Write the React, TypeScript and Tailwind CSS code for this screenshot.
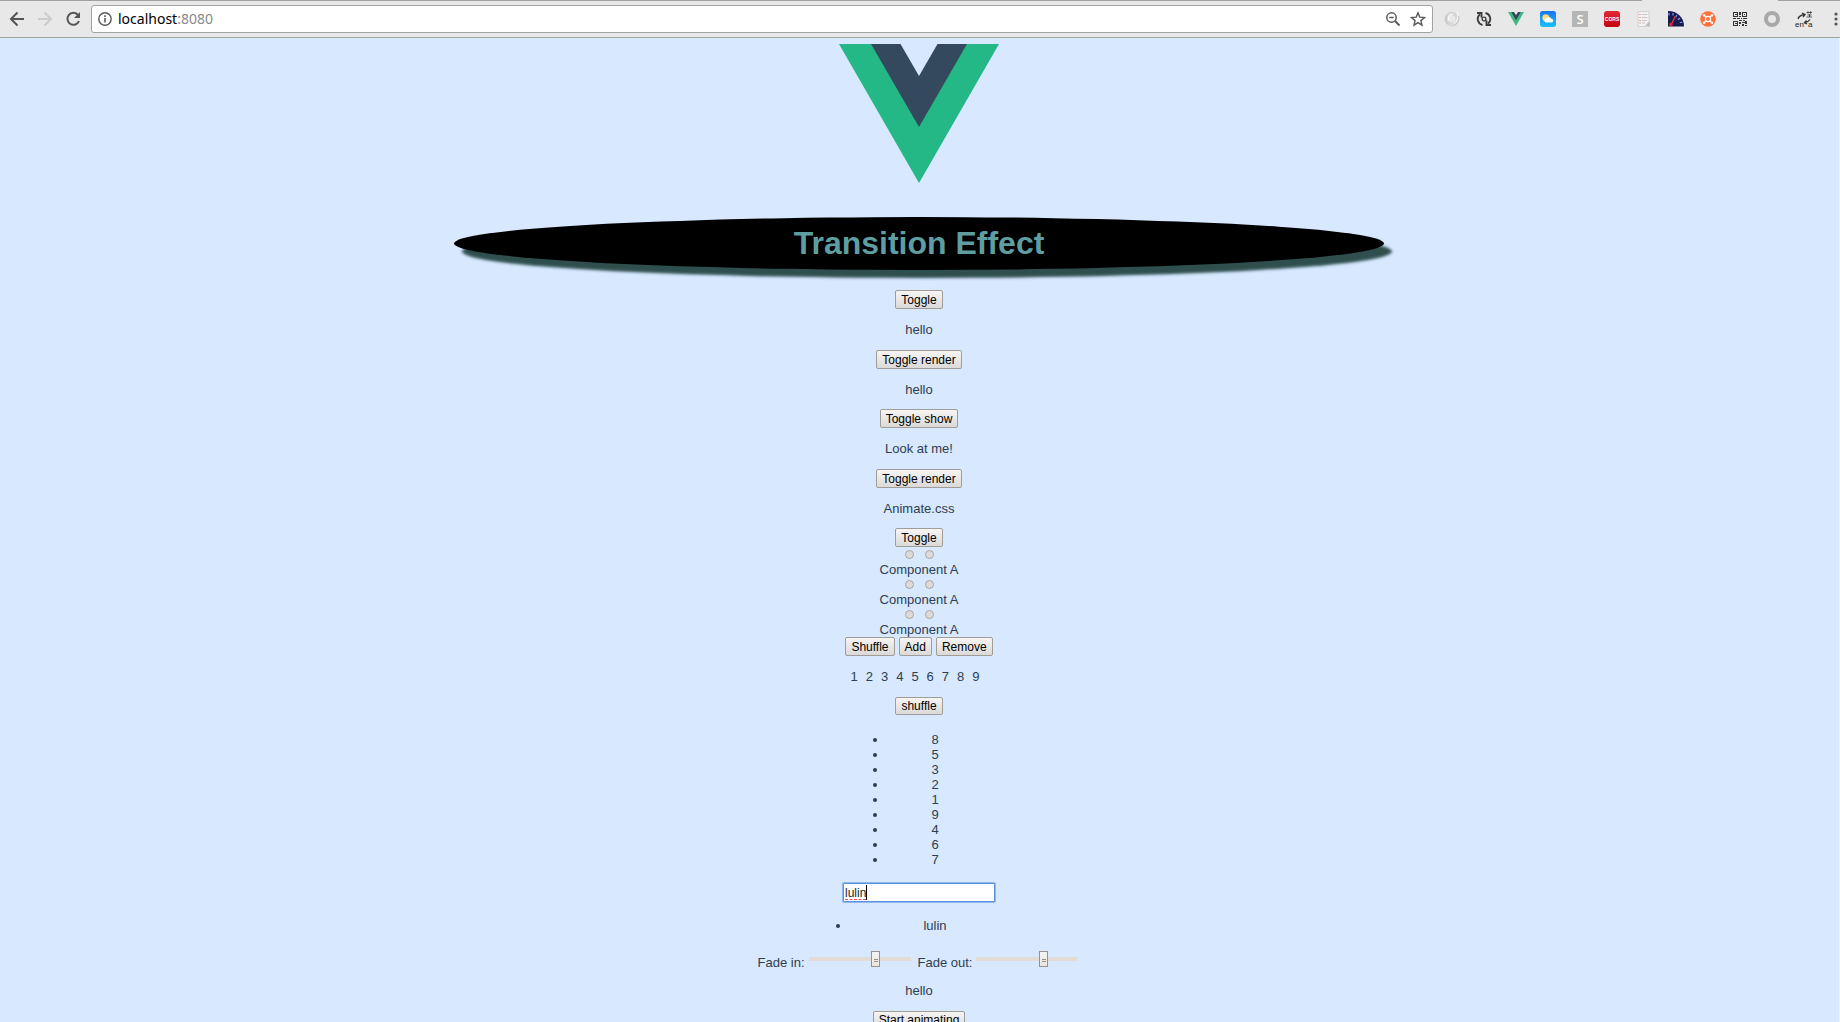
import { useState } from 'react';
import type { ReactNode } from 'react';

function Button({ children, onClick }: { children: ReactNode; onClick?: () => void }) {
  return (
    <button
      type="button"
      onClick={onClick}
      className="h-[19px] rounded-[2px] border border-[#a09c98] bg-linear-to-b from-[#f6f5f4] to-[#dcdad8] px-[5px] text-[12px] leading-[16px] text-black"
    >
      {children}
    </button>
  );
}

function VueMark({ className }: { className: string }) {
  return (
    <svg className={className} viewBox="0 0 160 139" aria-hidden="true">
      <path fill="#25b887" d="M0 0h160L80 139z" />
      <path fill="#35495e" d="M32 0h96L80 83z" />
      <path fill="#d7e8ff" d="M61.500 0h37L80 32z" />
    </svg>
  );
}

function IconButton({ label, children }: { label: string; children: ReactNode }) {
  return (
    <button type="button" aria-label={label} className="flex size-4 shrink-0 items-center justify-center">
      {children}
    </button>
  );
}

function Toolbar() {
  return (
    <header className="relative flex h-[38px] shrink-0 items-center border-t border-b border-t-[#a3a19f] border-b-[#a3a3a3] bg-[#e9e8e8] pl-[9px]">
      <span className="absolute -top-px right-[62px] h-px w-[136px] bg-[#e9e8e8]" />
      <nav className="flex items-center gap-3" aria-label="Navigation">
        <IconButton label="Back">
          <svg className="size-4 shrink-0" viewBox="0 0 16 16" fill="none" stroke="#555" strokeWidth="2">
            <path d="M15 8H3M8.500 1.500L2 8l6.500 6.500" />
          </svg>
        </IconButton>
        <IconButton label="Forward">
          <svg className="size-4 shrink-0" viewBox="0 0 16 16" fill="none" stroke="#ccc" strokeWidth="2">
            <path d="M1 8H13M7.500 1.500L14 8l-6.500 6.500" />
          </svg>
        </IconButton>
        <IconButton label="Reload">
          <svg className="size-4 shrink-0" viewBox="0 0 16 16" fill="none" stroke="#555" strokeWidth="2">
            <path d="M12.800 3.700A6 6 0 1 0 14 10" />
            <path d="M15 1v6H9z" fill="#555" stroke="none" />
          </svg>
        </IconButton>
      </nav>
      <div className="ml-[10px] flex h-7 flex-1 items-center rounded-[3px] border border-[#a3a3a3] bg-white pr-1.5 pl-1.5">
        <svg className="size-[14px] shrink-0" viewBox="0 0 14 14" fill="none" stroke="#5a5a5a" strokeWidth="1.400" aria-hidden="true">
          <circle cx="7" cy="7" r="6.200" />
          <path d="M7 6v4.500M7 3.300v1.600" strokeWidth="1.600" />
        </svg>
        <div className="ml-1.5 flex-1 text-[14px] leading-5 font-[Noto_Sans,sans-serif] text-black">
          localhost<span className="text-[#8a8a8a]">:8080</span>
        </div>
        <div className="flex items-center gap-[9px]">
          <IconButton label="Zoom">
            <svg className="size-4" viewBox="0 0 16 16" fill="none" stroke="#5a5a5a" strokeWidth="1.500">
              <circle cx="6.500" cy="6.500" r="4.700" />
              <path d="M4.300 6.500h4.400" />
              <path d="M10 10l4.500 4.500" strokeWidth="2" />
            </svg>
          </IconButton>
          <IconButton label="Bookmark">
            <svg className="size-4" viewBox="0 0 16 16" fill="none" stroke="#5a5a5a" strokeWidth="1.400">
              <path d="M8 1.800l1.800 4.300 4.700.4-3.600 3.100 1.100 4.600L8 11.700l-4 2.500 1.100-4.600-3.600-3.100 4.700-.4z" />
            </svg>
          </IconButton>
        </div>
      </div>
      <div className="ml-[11px] flex items-center gap-4">
        <IconButton label="Comet">
          <svg className="size-4" viewBox="0 0 16 16" fill="none">
            <circle cx="8" cy="8" r="5.500" stroke="#d6d6d6" strokeWidth="4" />
            <path d="M13 1.500c2.500 4 .5 9-3.500 12M9 3.500c-4-.5-5.500 3-4 6" stroke="#f8f8f8" strokeWidth="1.500" />
            <path d="M14.800 5c.6 4-1.500 7.500-5 9M3 4c-2 3-2 7 1 9" stroke="#c2c2c2" />
          </svg>
        </IconButton>
        <IconButton label="Auto refresh">
          <svg className="size-4" viewBox="0 0 16 16" fill="none" stroke="#3c3c3c" strokeWidth="1.900">
            <path d="M6.500 14A6.200 6.200 0 0 1 4 3.200M9.500 2A6.200 6.200 0 0 1 12 12.800" />
            <path d="M1 2h4.500v4.500M15 14h-4.500V9.500" />
            <circle cx="8" cy="8" r="1.900" strokeWidth="1.400" />
          </svg>
        </IconButton>
        <IconButton label="Vue devtools">
          <svg className="h-[14px] w-4" viewBox="0 0 16 14">
            <path fill="#41b883" d="M0 0h3.500L8 8l4.500-8H16L8 14z" />
            <path fill="#2f4858" d="M3.200 0H6l2 3.300L10 0h2.800L8 8.500z" />
          </svg>
        </IconButton>
        <IconButton label="Weather">
          <svg className="size-4" viewBox="0 0 16 16">
            <defs>
              <linearGradient id="sky" x1="0" y1="0" x2="0" y2="1">
                <stop stopColor="#1673ef" />
                <stop offset="1" stopColor="#18c4fb" />
              </linearGradient>
            </defs>
            <rect width="16" height="16" rx="2.500" fill="url(#sky)" />
            <circle cx="5.800" cy="6.800" r="3.500" fill="#fddc78" />
            <path fill="#fff" d="M6 11.500a2 2 0 0 1-.2-3.900 3.100 3.100 0 0 1 5.600.2A1.900 1.900 0 0 1 12 11.500z" />
          </svg>
        </IconButton>
        <IconButton label="Stylish">
          <span className="flex size-4 items-center justify-center rounded-[1px] bg-[#b5b5b5] font-[Open_Sans,sans-serif] text-[13px] leading-4 font-semibold text-white">S</span>
        </IconButton>
        <IconButton label="CORS">
          <span className="flex size-4 items-center justify-center rounded-[3px] bg-linear-to-b from-[#e32636] to-[#c2000d] text-[5px] leading-4 font-bold text-white">CORS</span>
        </IconButton>
        <IconButton label="Notes">
          <svg className="size-4" viewBox="0 0 16 16" fill="none">
            <path d="M2 .5h11v10L9 15.500H2z" fill="#f3f1f1" stroke="#d2d0d0" />
            <path d="M14 10v5.500H9z" fill="#bdbdbd" />
            <path d="M6 3.500h5.500M6 6.500h5.500M6 9.500h5M6 12h3" stroke="#c7c7c7" />
            <path d="M3 3.500h2M3 6.500h2M3 9.500h2M3 12h2" stroke="#e9a7a7" />
          </svg>
        </IconButton>
        <IconButton label="Speed">
          <svg className="size-4" viewBox="0 0 16 16" fill="none">
            <path d="M0 0c9 0 16 6 16 15.500H0z" fill="#161b4e" />
            <path d="M1 2v2.500M5 2v2.500M9 4L7.800 6.200M12 7l-2 1.800M14.300 11l-2.500.8" stroke="#7f9cff" strokeWidth="1.200" />
            <path d="M3 14L7.500 5" stroke="#f03048" strokeWidth="1.400" />
            <circle cx="2.800" cy="13.500" r="1.800" fill="#e02438" />
          </svg>
        </IconButton>
        <IconButton label="Hub">
          <svg className="size-4" viewBox="0 0 16 16" fill="none" stroke="#fff">
            <circle cx="8" cy="8" r="7.800" fill="#ff7139" stroke="none" />
            <circle cx="8" cy="8" r="2.600" strokeWidth="1.200" />
            <path d="M10 6L11.500 4.500M6 6L4.500 4.500M6 10L4.500 11.500M10 10L11.500 11.500" strokeWidth="1.200" />
            <g fill="#fff" stroke="none">
              <circle cx="4" cy="4.200" r="1.200" />
              <circle cx="12" cy="4.200" r="1.200" />
              <circle cx="4" cy="11.800" r="1.200" />
              <circle cx="12" cy="11.800" r="1.200" />
            </g>
          </svg>
        </IconButton>
        <IconButton label="QR code">
          <svg className="size-[14px]" viewBox="0 0 14 14" fill="none" stroke="#333" strokeWidth="1.300" shapeRendering="crispEdges">
            <path d="M.7.7h4v4h-4zM9.300.7h4v4h-4zM.7 9.300h4v4h-4z" />
            <path d="M2 2.700h1.500M10.500 2.700H12M2 11.300h1.500M7 0v3M6 4.500h2M0 6.700h3M4 6.700h3M8 6.700h1M10 6.700h4M6 8.700h3M10 8.700h2M7 10v1M6 11.500h2M9 10.500h3M13 9v3M9 13h2M6 13.300h1M12 13.300h2" />
          </svg>
        </IconButton>
        <IconButton label="Ring">
          <svg className="size-4" viewBox="0 0 16 16" fill="none">
            <circle cx="8" cy="8" r="6" stroke="#a9a9a9" strokeWidth="4" />
          </svg>
        </IconButton>
        <IconButton label="Translate">
          <svg className="size-4" viewBox="0 0 16 16" fill="none" stroke="#333" overflow="visible">
            <path d="M2 8c1-3 3-4 6-4.500M6 2l3 1.500L7 6M14 8.500c-1 1.500-2.500 2.500-5 3M10.500 9.500L8.500 11.700l2.500 1.300" strokeWidth="1.300" />
            <path d="M10.500 1.500h5.500M12 .3v2.400M14.500.3v2.400M11.500 4h4M10.500 6h5.500M13.500 3v3" strokeWidth=".8" />
            <text x="-1" y="15.500" fontSize="8" fontFamily="Liberation Sans, sans-serif" fill="#222" stroke="none">en</text>
            <text x="12" y="15.500" fontSize="8" fontFamily="Liberation Sans, sans-serif" fill="#222" stroke="none">a</text>
          </svg>
        </IconButton>
        <button type="button" aria-label="Menu" className="flex h-4 w-3 shrink-0 items-center pl-1">
          <svg className="h-[14px] w-2 shrink-0" viewBox="0 0 8 14" fill="#555">
            <circle cx="4" cy="2" r="1.600" />
            <circle cx="4" cy="7" r="1.600" />
            <circle cx="4" cy="12" r="1.600" />
          </svg>
        </button>
      </div>
    </header>
  );
}

function Demo({ action, text }: { action: string; text: string }) {
  return (
    <>
      <Button>{action}</Button>
      <p>{text}</p>
    </>
  );
}

function RadioPair({ name }: { name: string }) {
  const radio = 'size-[9px] appearance-none rounded-full border border-[#a8a6a4] bg-[#dddbd9] checked:bg-[#55524f]';
  return (
    <div>
      <div className="flex h-[15px] items-center justify-center gap-[11px]">
        <input type="radio" name={name} value="a" aria-label="Component A" className={radio} />
        <input type="radio" name={name} value="b" aria-label="Component B" className={radio} />
      </div>
      <div>Component A</div>
    </div>
  );
}

function Slider({ id, label, initial }: { id: string; label: string; initial: number }) {
  const [value, setValue] = useState(initial);
  return (
    <div className="flex items-start">
      <label htmlFor={id} className="mt-1">{label}</label>
      <input
        id={id}
        type="range"
        min={0}
        max={100}
        value={value}
        onChange={(e) => setValue(Number(e.target.value))}
        className="ml-1 h-4 w-[102px] appearance-none bg-transparent [&::-webkit-slider-runnable-track]:h-1 [&::-webkit-slider-runnable-track]:bg-[#e3dcd6] [&::-webkit-slider-thumb]:-mt-1.5 [&::-webkit-slider-thumb]:h-4 [&::-webkit-slider-thumb]:w-[9px] [&::-webkit-slider-thumb]:appearance-none [&::-webkit-slider-thumb]:border [&::-webkit-slider-thumb]:border-[#98918b] [&::-webkit-slider-thumb]:bg-[linear-gradient(#98918b,#98918b),linear-gradient(#98918b,#98918b),linear-gradient(#f5f3f1,#e8e4e0)] [&::-webkit-slider-thumb]:bg-[size:4px_1px,4px_1px,100%_100%] [&::-webkit-slider-thumb]:bg-[position:2px_7px,2px_9px,0_0] [&::-webkit-slider-thumb]:bg-no-repeat"
      />
    </div>
  );
}

const cells = [1, 2, 3, 4, 5, 6, 7, 8, 9];

export default function App() {
  const [items, setItems] = useState([8, 5, 3, 2, 1, 9, 4, 6, 7]);
  const [query, setQuery] = useState('lulin');
  const shuffle = () => setItems((list) => [...list].sort(() => Math.random() - 0.5));

  return (
    <div className="flex h-screen flex-col overflow-hidden bg-[#d7e8ff] font-[Liberation_Sans,Arial,sans-serif]">
      <Toolbar />
      <main className="flex flex-1 flex-col items-center overflow-hidden border-r border-[#f2f4f7] pt-1.5 pr-px text-center text-[13px] leading-[15px] text-[#2c3e50]">
        <VueMark className="h-[139px] w-40 shrink-0" />
        <h1 className="mt-[34px] w-full max-w-[930px] shrink-0 rounded-[50%] bg-black py-2 text-[32px] leading-[37px] font-bold text-[#5f9ea0] shadow-[8px_8px_3px_darkslategray]">
          Transition Effect
        </h1>
        <div className="mt-5 flex shrink-0 flex-col items-center gap-3">
          <div className="flex flex-col items-center gap-[13px]">
            <Demo action="Toggle" text="hello" />
            <Demo action="Toggle render" text="hello" />
          </div>
          <div className="flex flex-col items-center gap-[13px]">
            <Demo action="Toggle show" text="Look at me!" />
            <Demo action="Toggle render" text="Animate.css" />
          </div>
          <Button>Toggle</Button>
        </div>
        <RadioPair name="first" />
        <RadioPair name="second" />
        <RadioPair name="third" />
        <div className="flex gap-1">
          <Button>Shuffle</Button>
          <Button>Add</Button>
          <Button>Remove</Button>
        </div>
        <div className="my-[13px] flex gap-2 pr-2">
          {cells.map((n) => (
            <span key={n}>{n}</span>
          ))}
        </div>
        <Button onClick={shuffle}>shuffle</Button>
        <ul className="mt-[17px] w-[126px] list-disc pl-8">
          {items.map((n) => (
            <li key={n}>{n}</li>
          ))}
        </ul>
        <div className="relative mt-4 flex shrink-0">
          <input
            type="text"
            aria-label="Filter names"
            autoFocus
            spellCheck={false}
            value={query}
            onChange={(e) => setQuery(e.target.value)}
            className="h-[19px] w-[152px] rounded-[1px] border border-[#5a93e0] bg-white px-px text-[12px] leading-4 text-[#222] caret-transparent ring-1 ring-[#8fb8f0] outline-none"
          />
          <span className="pointer-events-none absolute top-0.5 left-0.5 h-[15px] border-r border-black text-[12px] leading-[14px] text-transparent">
            {query}
            <span className="absolute inset-x-0 bottom-0 border-b border-dashed border-[#f0506a]" />
          </span>
        </div>
        <ul className="mt-4 w-[200px] list-disc pl-8">
          <li>lulin</li>
        </ul>
        <div className="mt-[18px] flex gap-[7px] pr-0.5">
          <Slider id="fade-in" label="Fade in:" initial={67} />
          <Slider id="fade-out" label="Fade out:" initial={67} />
        </div>
        <p className="my-[13px]">hello</p>
        <Button>Start animating</Button>
      </main>
    </div>
  );
}
